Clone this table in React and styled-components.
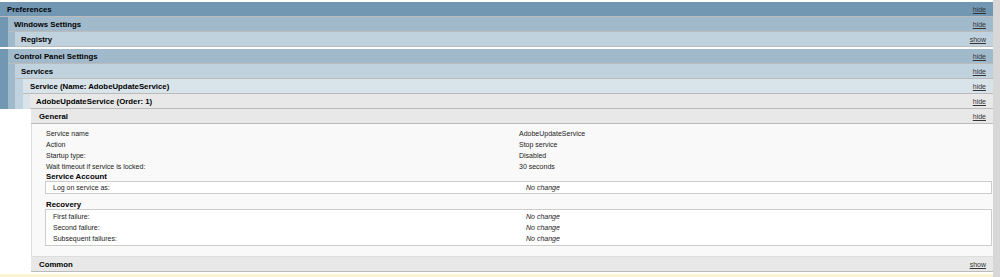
import React from "react";
import styled, { createGlobalStyle } from "styled-components";

const Global = createGlobalStyle`
  html, body { margin: 0; padding: 0; background: #fff; overflow: hidden; }
  body { font-family: "Liberation Sans", Arial, sans-serif; }
`;

const C = {
  l0: "#7197b3",
  l1: "#a0bacb",
  l2: "#c0d2de",
  l3: "#d9e3ea",
  l4: "#e8e8e8",
  info: "#f9f9f9",
};

const Frame = styled.div`
  display: flex;
  align-items: stretch;
  height: 277px;
  overflow: hidden;
`;

const Main = styled.div`
  flex: 1;
  min-width: 0;
  padding-top: 2px;
`;

const Rail = styled.div`
  flex: none;
  width: 7px;
  background: #d7d7d7;
`;

const Bar = styled.div`
  display: flex;
  align-items: center;
  justify-content: space-between;
  height: 14px;
  border-bottom: 1px solid #bbbbbb;
  background: ${(p) => p.$bg};
  padding: 0 7px 0 ${(p) => p.$pad}px;
  font-weight: bold;
  font-size: 7.8px;
  color: #000;
  white-space: nowrap;
`;

const Toggle = styled.a`
  font-weight: normal;
  font-size: 7px;
  color: #333;
  text-decoration: underline;
  cursor: pointer;
`;

const Nest = styled.div`
  background: ${(p) => p.$bg};
  padding-left: ${(p) => p.$indent}px;
  margin-top: ${(p) => p.$gap || 0}px;
`;

const Body = styled.div`
  margin-left: 31px;
`;

const Info = styled.div`
  background: ${C.info};
  border-left: 1px solid #dddddd;
  border-bottom: 1px solid #dddddd;
  padding: 4px 1px 10px 14px;
  font-size: 7px;
  color: #222;
`;

const Row = styled.div`
  display: grid;
  grid-template-columns: 473px 1fr;
  height: 11px;
  line-height: 11px;
  white-space: nowrap;
`;

const Value = styled.span`
  font-style: ${(p) => (p.$italic ? "italic" : "normal")};
`;

const SubHead = styled.div`
  font-weight: bold;
  font-size: 7.8px;
  line-height: 9px;
  color: #000;
  margin-top: ${(p) => p.$gap || 0}px;
`;

const Box = styled.div`
  background: #fff;
  border: 1px solid #cccccc;
  margin-left: -1px;
  padding: ${(p) => p.$pad || 0}px 0 ${(p) => p.$pad || 0}px 7px;
`;

const Next = styled.div`
  height: 15px;
  margin-top: 2px;
  background: #fcf2d4;
`;

const Header = ({ bg, pad = 6, title, action = "hide" }) => (
  <Bar $bg={bg} $pad={pad}>
    <span>{title}</span>
    <Toggle>{action}</Toggle>
  </Bar>
);

const general = [
  ["Service name", "AdobeUpdateService"],
  ["Action", "Stop service"],
  ["Startup type:", "Disabled"],
  ["Wait timeout if service is locked:", "30 seconds"],
];

const recovery = ["First failure:", "Second failure:", "Subsequent failures:"];

export default function App() {
  return (
    <>
      <Global />
      <Frame>
        <Main>
          <Header bg={C.l0} pad={7} title="Preferences" />
          <Nest $bg={C.l0} $indent={8}>
            <Header bg={C.l1} title="Windows Settings" />
            <Nest $bg={C.l1} $indent={7}>
              <Header bg={C.l2} title="Registry" action="show" />
            </Nest>
          </Nest>
          <Nest $bg={C.l0} $indent={8} $gap={2}>
            <Header bg={C.l1} title="Control Panel Settings" />
            <Nest $bg={C.l1} $indent={7}>
              <Header bg={C.l2} title="Services" />
              <Nest $bg={C.l2} $indent={8}>
                <Header bg={C.l3} pad={7} title="Service (Name: AdobeUpdateService)" />
                <Nest $bg={C.l3} $indent={7}>
                  <Header bg={C.l4} title="AdobeUpdateService (Order: 1)" />
                </Nest>
              </Nest>
            </Nest>
          </Nest>
          <Body>
            <Header bg={C.l4} pad={8} title="General" />
            <Info>
              {general.map(([k, v]) => (
                <Row key={k}>
                  <span>{k}</span>
                  <Value>{v}</Value>
                </Row>
              ))}
              <SubHead>Service Account</SubHead>
              <Box>
                <Row>
                  <span>Log on service as:</span>
                  <Value $italic>No change</Value>
                </Row>
              </Box>
              <SubHead $gap={6}>Recovery</SubHead>
              <Box $pad={1}>
                {recovery.map((k) => (
                  <Row key={k}>
                    <span>{k}</span>
                    <Value $italic>No change</Value>
                  </Row>
                ))}
              </Box>
            </Info>
            <Header bg={C.l4} pad={8} title="Common" action="show" />
          </Body>
          <Next />
        </Main>
        <Rail />
      </Frame>
    </>
  );
}
